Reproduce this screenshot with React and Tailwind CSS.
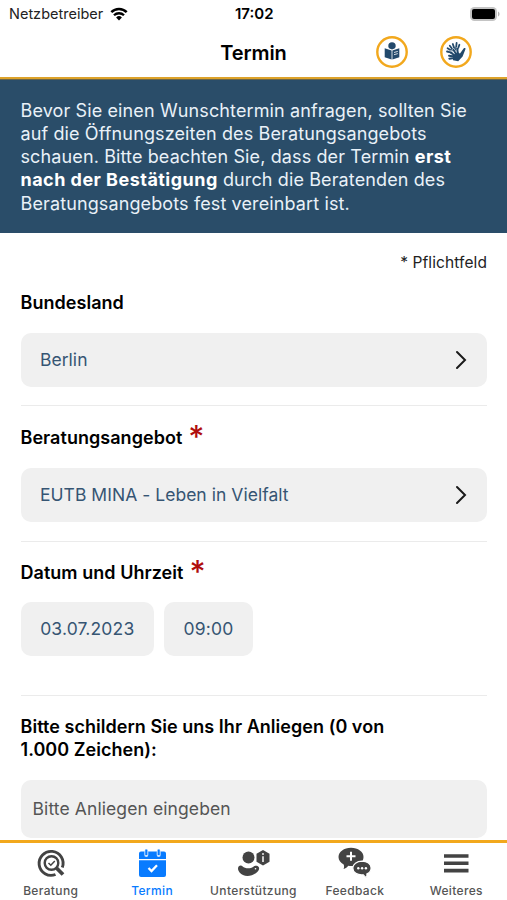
function WifiIcon() {
  return (
    <svg className="h-[14px] w-[18px]" viewBox="0 0 18 14">
      <path d="M1.300 5.200a11 11 0 0 1 15.400 0" fill="none" stroke="#000" strokeWidth="2.500" />
      <path d="M4 8.300a7.100 7.100 0 0 1 10 0" fill="none" stroke="#000" strokeWidth="2.300" />
      <path d="M9 13.500l-2.900-3a4.200 4.200 0 0 1 5.800 0z" fill="#000" />
    </svg>
  );
}

function StatusBar() {
  return (
    <div className="relative flex h-7 shrink-0 items-center justify-between pl-[9px] pr-[7px] text-[15px] text-[#222]">
      <div className="flex items-center gap-[7px]">
        <span className="text-[14.5px]">Netzbetreiber</span>
        <WifiIcon />
      </div>
      <span className="absolute left-[235px] text-[15px] font-semibold text-black">17:02</span>
      <svg className="h-4 w-[31px]" viewBox="0 0 31 16">
        <rect x="1" y="1" width="27" height="14" rx="4.5" fill="#c4c4c4" />
        <rect x="3" y="3" width="23" height="10" rx="2" fill="#000" />
        <path d="M29 5.500c2 .8 2 4.200 0 5z" fill="#b5b5b5" />
      </svg>
    </div>
  );
}

function ReadIcon() {
  return (
    <svg className="h-8 w-8" viewBox="0 0 32 32">
      <circle cx="16" cy="16" r="14.700" fill="#fff" stroke="#f2a81d" strokeWidth="2.400" />
      <path d="M12.300 10a3.700 3.700 0 0 1 7.400 0c0 1-.5 1.900-1.200 2.500l-2.500 1-2.500-1c-.7-.6-1.200-1.500-1.200-2.500z" fill="#22496b" />
      <path d="M8.700 12.200l6.900 2.200v9L8.700 21.200zM23.300 12.200l-6.900 2.200v9l6.900-2.200z" fill="#22496b" />
      <path d="M18 16.500l3.800-1.100M18 18.700l3.800-1.100" stroke="#fff" strokeWidth=".8" />
    </svg>
  );
}

function SignIcon() {
  return (
    <svg className="h-8 w-8" viewBox="0 0 32 32">
      <circle cx="16" cy="16" r="14.700" fill="#fff" stroke="#f2a81d" strokeWidth="2.400" />
      {/* hand behind */}
      <g stroke="#22496b" strokeWidth="1.800" strokeLinecap="round" fill="none">
        <path d="M12 15L7.600 12.200M13 14L9.800 9.800M14.500 13l-1.700-5M16 13l.6-6M17.500 14l1.900-5.200" />
        <path d="M11.500 16.500l-4.500-1" />
      </g>
      <path d="M11 14.500l3-2.200 4.300 1.200-4.800 6.500-3-2z" fill="#22496b" />
      {/* white gap between the two hands */}
      <path d="M13.500 20l-4.500-1M14.500 18.500l-3.500-3M16 17.500l-2.500-4M18 17l-1-4.500" stroke="#fff" strokeWidth="2.400" strokeLinecap="round" />
      {/* hand in front */}
      <g stroke="#22496b" strokeWidth="1.900" strokeLinecap="round" fill="none">
        <path d="M14 22l-4.700.7M14 20.500l-5-.8M14.500 19.500l-3.700-3.300M16 18l-2.500-4.200M18 17.500l-.9-5" />
      </g>
      <path d="M13 19.500l4-3.300 3 1.300 3.800-5.200c.7-.8 2-.3 1.700.8L22.600 20.500l-4.400 4.700-5.200-1z" fill="#22496b" />
    </svg>
  );
}

function Header() {
  return (
    <header className="relative flex h-[51px] shrink-0 items-center justify-center border-b-2 border-[#dda22a]">
      <h1 className="text-[20px] font-semibold tracking-[-0.1px] text-black">Termin</h1>
      <div className="absolute right-[35px] top-[8px] flex gap-8">
        <ReadIcon />
        <SignIcon />
      </div>
    </header>
  );
}

function Label({ children, required }) {
  return (
    <div className="flex h-6 items-center text-[18px] font-semibold tracking-[0.04px] text-black">
      <span>{children}</span>
      {required && <span className="ml-[6px] h-6 text-[31px] font-medium leading-[21px] text-[#b00d0d]">*</span>}
    </div>
  );
}

function SelectField({ value }) {
  return (
    <div className="mt-[18.500px] flex h-[54px] items-center justify-between rounded-[10px] bg-[#f0f0f0] pl-[19.500px] pr-5 text-[17.5px] tracking-[0.03px] text-[#365573]">
      <span>{value}</span>
      <svg className="h-5 w-3" viewBox="0 0 12 20" fill="none" stroke="#1a1a1a" strokeWidth="2" strokeLinecap="round">
        <path d="M2 2l8 8-8 8" />
      </svg>
    </div>
  );
}

function Divider() {
  return <div className="h-px bg-[#ebebeb]" />;
}

function AdviceIcon() {
  return (
    <svg className="h-8 w-8" viewBox="0 0 32 32" fill="none" stroke="#434343">
      <path d="M20.500 27.500A12 12 0 1 1 27.300 20.600" strokeWidth="2.900" />
      <circle cx="16.500" cy="16" r="6.800" strokeWidth="2.400" />
      <path d="M21.500 21l6.500 6.500" strokeWidth="3.800" />
      <path d="M13.500 16l2.300 2.200 4-4.200" strokeWidth="1.500" />
    </svg>
  );
}

function CalendarIcon() {
  return (
    <svg className="h-8 w-8" viewBox="0 0 32 32">
      <path d="M3 12V6.500a2 2 0 0 1 2-2h23a2 2 0 0 1 2 2V12z" fill="#087bff" />
      <path d="M3 13.300h27V28a2 2 0 0 1-2 2H5a2 2 0 0 1-2-2z" fill="#087bff" />
      <path d="M10.300 4.500v3.500M22.700 4.500v3.500" stroke="#c9e2ff" strokeWidth="4" strokeLinecap="round" />
      <path d="M10.300 2.500v5.500M22.700 2.500v5.500" stroke="#087bff" strokeWidth="2" />
      <path d="M12.500 21l3 3 5.500-5.800" fill="none" stroke="#fff" strokeWidth="2.300" />
    </svg>
  );
}

function SupportIcon() {
  return (
    <svg className="h-8 w-8 overflow-visible" viewBox="0 0 32 32" fill="#434343">
      <circle cx="11.500" cy="10.500" r="6" />
      <path d="M26 3l6.500 3.800v8L26 18.600l-6.500-3.800v-8z" />
      <path d="M1 21.500c0-2.900 3-4.100 4.700-2.100 2 2.300 8.200 2.300 10.300.5 1.500-1.400 4.600-1.600 5.700.2 1 1.500.1 3.200-1.200 4.600-5.500 5.700-14.500 5.200-17.700 1.100-.9-1.100-1.800-2.800-1.800-4.300z" />
      <circle cx="18.500" cy="21.700" r=".8" fill="#fff" />
      <path d="M26 9.300v5.700" stroke="#fff" strokeWidth="1.500" />
      <circle cx="26" cy="7" r=".9" fill="#fff" />
    </svg>
  );
}

function FeedbackIcon() {
  return (
    <svg className="h-8 w-[34px] overflow-visible" viewBox="0 0 34 32" fill="#434343">
      <path d="M13 .7C6 .7.5 4.800.5 9.900c0 3.200 2 5.800 5.200 7.500.6 1.600.5 3.300-.2 4.600 2.100-.5 3.800-1.700 4.800-3.200 8.300 1.300 15.200-2.800 15.200-8.900C25.500 4.800 20 .7 13 .7z" />
      <path d="M24 14.200c-5.200 0-9.200 3-9.200 6.800 0 4.500 4.700 7.400 10.500 6.800 1 1.600 2 2.500 4.100 2.900-.5-1.200-.7-2.500-.5-3.800 2.800-1.200 4.200-3.500 4.200-5.900 0-4-3.900-6.800-9.100-6.800z" stroke="#fff" strokeWidth="1.200" />
      <path d="M13 4.700v9M8.500 9.200h9" stroke="#fff" strokeWidth="2" />
      <circle cx="20.300" cy="21.300" r="1.200" fill="#fff" />
      <circle cx="24.100" cy="21.300" r="1.200" fill="#fff" />
      <circle cx="27.900" cy="21.300" r="1.200" fill="#fff" />
    </svg>
  );
}

function MenuIcon() {
  return (
    <svg className="h-8 w-8" viewBox="0 0 32 32" stroke="#434343" strokeWidth="3.600">
      <path d="M4 9h24.500M4 16.300h24.500M4 23.600h24.500" />
    </svg>
  );
}

const tabs = [
  { label: 'Beratung', Icon: AdviceIcon },
  { label: 'Termin', Icon: CalendarIcon, active: true },
  { label: 'Unterstützung', Icon: SupportIcon },
  { label: 'Feedback', Icon: FeedbackIcon },
  { label: 'Weiteres', Icon: MenuIcon },
];

function TabBar() {
  return (
    <nav className="grid h-[60px] shrink-0 grid-cols-5 border-t-[3px] border-[#f2a81d] bg-white">
      {tabs.map(({ label, Icon, active }) => (
        <div key={label} className={`flex flex-col items-center pt-1 text-[12px] font-medium tracking-[0.35px] ${active ? 'text-[#087bff]' : 'text-[#555]'}`}>
          <Icon />
          <span className="mt-[3px] leading-[18px]">{label}</span>
        </div>
      ))}
    </nav>
  );
}

export default function App() {
  return (
    <div className="flex h-[900px] w-[507px] flex-col overflow-hidden bg-white font-['Inter',sans-serif]">
      <StatusBar />
      <Header />
      <div className="h-[154px] shrink-0 border-t border-[#6b6648] bg-[#2a4d69] pl-[20.500px] pt-[18.500px] text-[18px] leading-[23.3px] tracking-[0.12px] text-[#e9f1f8]">
        <p className="whitespace-nowrap">
          Bevor Sie einen Wunschtermin anfragen, sollten Sie<br />
          auf die Öffnungszeiten des Beratungsangebots<br />
          schauen. Bitte beachten Sie, dass der Termin <b className="font-bold tracking-[0.47px] text-white">erst</b><br />
          <b className="font-bold tracking-[0.47px] text-white">nach der Bestätigung</b> durch die Beratenden des<br />
          Beratungsangebots fest vereinbart ist.
        </p>
      </div>

      <main className="min-h-0 flex-1 overflow-hidden pl-[20.500px] pr-5">
        <p className="mt-[18px] text-right text-[15.500px] leading-6 tracking-[0.1px] text-[#222]">* Pflichtfeld</p>
        <div className="mt-[15.500px]">
          <Label>Bundesland</Label>
          <SelectField value="Berlin" />
        </div>
        <div className="mt-[18px]">
          <Divider />
          <div className="mt-[19.500px]">
            <Label required>Beratungsangebot</Label>
            <SelectField value="EUTB MINA - Leben in Vielfalt" />
          </div>
        </div>
        <div className="mt-[19px]">
          <Divider />
          <div className="mt-[18.500px]">
            <Label required>Datum und Uhrzeit</Label>
            <div className="mt-[17.500px] flex gap-[10px] text-[17.5px] tracking-[0.15px] text-[#365573]">
              <div className="flex h-[54px] w-[133.500px] items-center justify-center rounded-[10px] bg-[#f0f0f0] pt-px">03.07.2023</div>
              <div className="flex h-[54px] w-[89px] items-center justify-center rounded-[10px] bg-[#f0f0f0] pt-px">09:00</div>
            </div>
          </div>
        </div>
        <div className="mt-[39px]">
          <Divider />
          <p className="mt-[18.500px] text-[18px] font-semibold leading-[23.500px] tracking-[0.04px] text-black">
            Bitte schildern Sie uns Ihr Anliegen (0 von<br />1.000 Zeichen):
          </p>
          <div className="mt-[18px] flex h-[58px] items-center rounded-[10px] bg-[#f0f0f0] pl-3 pt-[2px] text-[17.5px] tracking-[0.1px] text-[#555]">
            Bitte Anliegen eingeben
          </div>
        </div>
      </main>
      <TabBar />
    </div>
  );
}
